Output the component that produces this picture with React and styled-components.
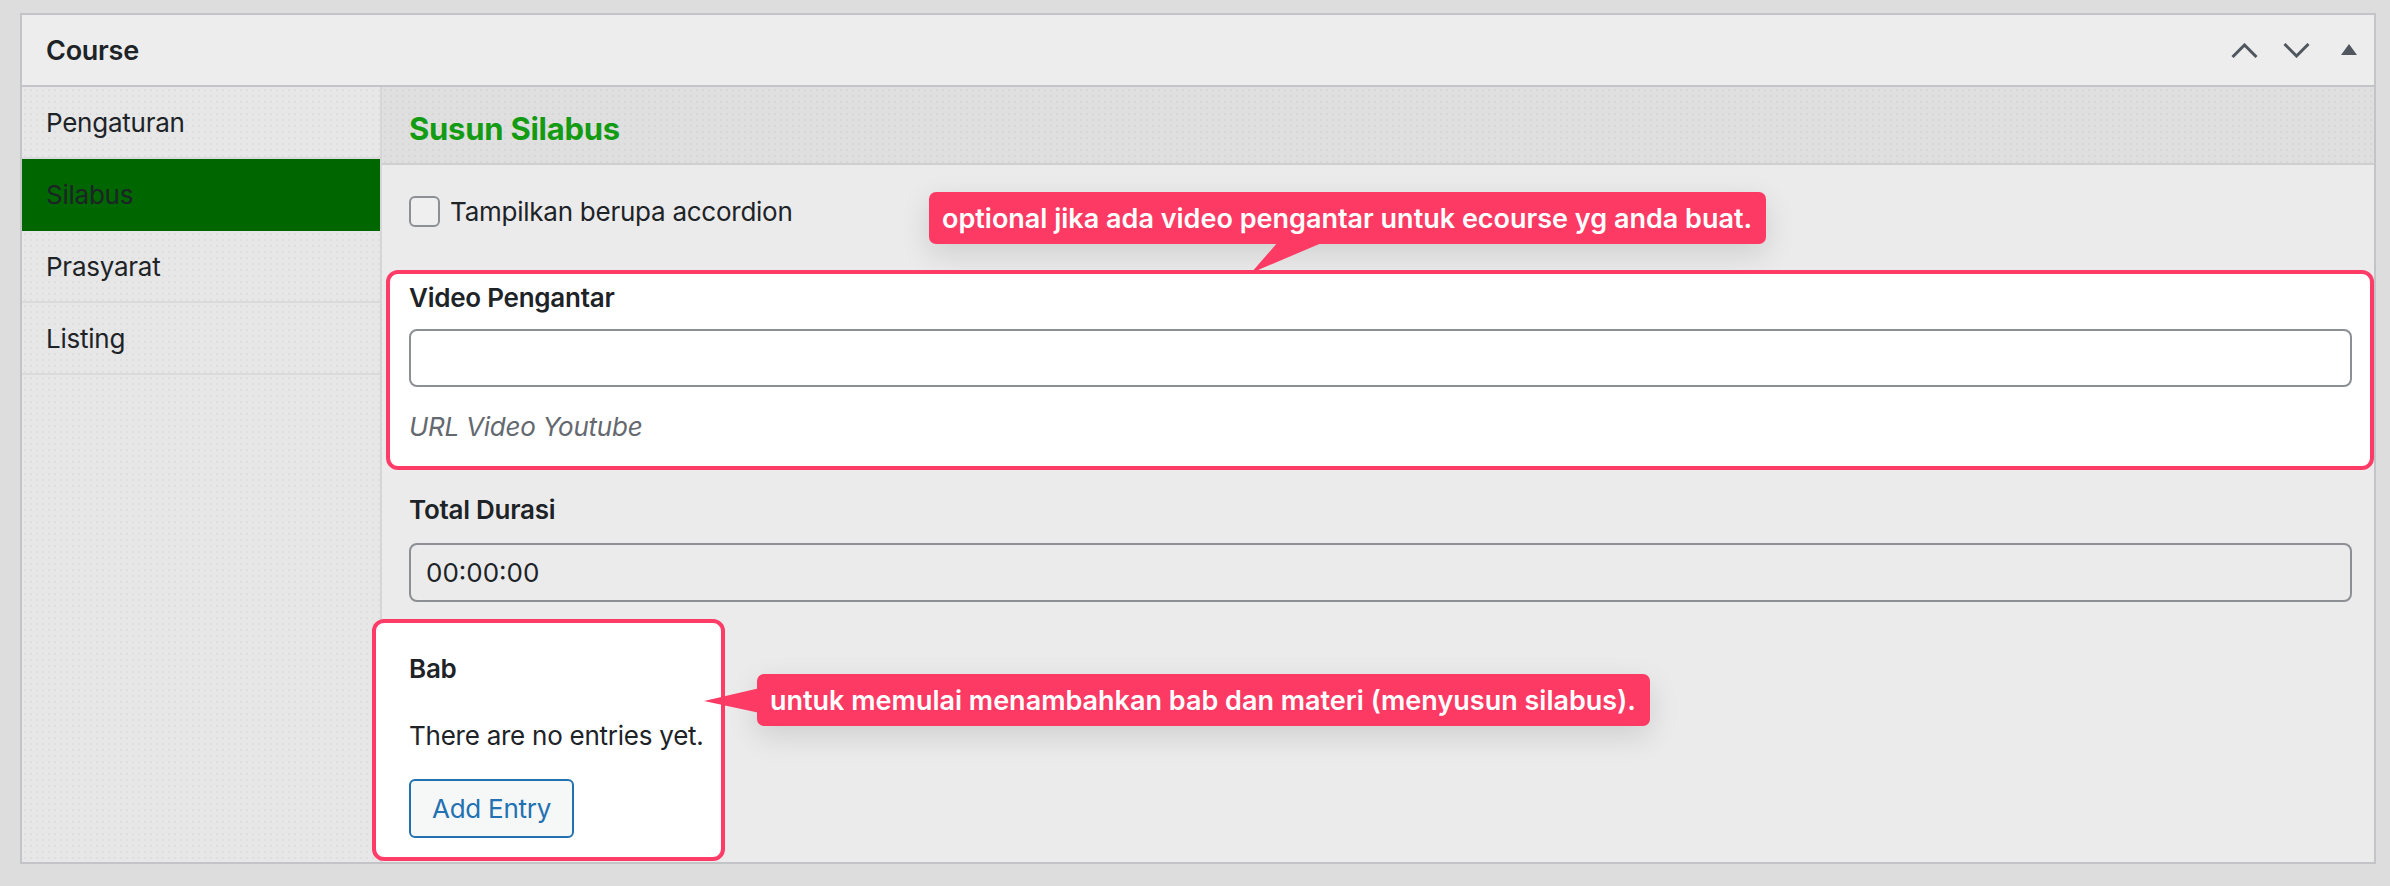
import React from 'react';
import styled, { createGlobalStyle, css } from 'styled-components';

const GlobalStyle = createGlobalStyle`
  body {
    margin: 0;
    background: #dddddd;
    font-family: Inter, "Noto Sans", "Liberation Sans", sans-serif;
    color: #1d2327;
    letter-spacing: -0.25px;
  }
  * { box-sizing: border-box; }
`;

const dots = css`
  background-image: radial-gradient(rgba(0, 0, 0, 0.035) 1px, transparent 1.2px);
  background-size: 6px 6px;
`;

const Page = styled.div`
  padding: 13px 14px 0 20px;
`;

const Postbox = styled.section`
  border: 2px solid #c3c4c7;
  background: #ebebeb;
`;

const Header = styled.header`
  display: flex;
  align-items: center;
  justify-content: space-between;
  height: 72px;
  padding: 0 17px 0 24px;
  background: #ededed;
  border-bottom: 2px solid #c3c4c7;
`;

const BoxTitle = styled.h2`
  margin: 0;
  font-size: 27px;
  font-weight: 600;
`;

const HandleActions = styled.div`
  display: flex;
  align-items: center;
  gap: 25px;
  color: #50575e;

  & > svg:last-child {
    margin-left: 6px;
  }
`;

const Body = styled.div`
  display: flex;
`;

const Sidebar = styled.nav`
  width: 360px;
  flex-shrink: 0;
  background-color: #e7e7e7;
  ${dots};
  border-right: 2px solid #d6d6d6;
`;

const TabItem = styled.div`
  display: flex;
  align-items: center;
  height: 72px;
  padding-left: 24px;
  font-size: 26px;
  border-bottom: 2px solid #dadada;
  ${p => p.$active && css`
    background: #006600;
    background-image: none;
    border-bottom-color: #006600;
  `}
`;

const Panel = styled.div`
  flex: 1;
  background: #ebebeb;
`;

const PanelTitle = styled.h3`
  margin: 0;
  display: flex;
  align-items: center;
  height: 78px;
  padding: 6px 0 0 27px;
  background-color: #dfdfdf;
  ${dots};
  border-bottom: 2px solid #cfcfcf;
  color: #149b14;
  font-size: 31px;
  font-weight: 700;
`;

const Form = styled.div`
  display: flex;
  flex-direction: column;
  padding: 31px 22px 1px 27px;
`;

const CheckRow = styled.label`
  display: flex;
  align-items: center;
  gap: 10px;
  height: 31px;
  font-size: 26px;
`;

const Checkbox = styled.input`
  appearance: none;
  margin: 0;
  width: 31px;
  height: 31px;
  border: 2px solid #8c8f94;
  border-radius: 6px;
  background: #efefef;
`;

const Highlight = styled.div`
  position: relative;
  background: #fff;
  border: 4px solid #ff3b67;
  border-radius: 12px;
  ${p => p.$wide
    ? css`
      margin: 43px -22px 0 -23px;
      padding: 6px 18px 21px 19px;
    `
    : css`
      align-self: flex-start;
      width: 353px;
      margin: 17px 0 0 -37px;
      padding: 28px 0 19px 33px;
    `}
`;

const Label = styled.div`
  font-size: 26px;
  font-weight: 600;
  line-height: 36px;
  margin-top: ${p => p.$gap || 0}px;
`;

const TextInput = styled.input`
  display: block;
  width: 100%;
  height: ${p => p.$h || 58}px;
  margin-top: ${p => p.$gap || 13}px;
  padding: 0 15px;
  border: 2px solid #8c8f94;
  border-radius: 8px;
  background: ${p => p.$plain ? 'transparent' : '#fff'};
  font-family: inherit;
  font-size: 26px;
  color: #1d2327;
`;

const Description = styled.p`
  margin: 22px 0 0;
  font-size: 26px;
  line-height: 36px;
  font-style: italic;
  color: #646970;
`;

const Text = styled.p`
  margin: 31px 0 0;
  font-size: 26px;
  line-height: 36px;
`;

const Button = styled.button`
  display: block;
  margin-top: 25px;
  height: 59px;
  padding: 0 21px;
  border: 2px solid #2271b1;
  border-radius: 6px;
  background: #f6f7f7;
  color: #2271b1;
  font-family: inherit;
  font-size: 26px;
  letter-spacing: -0.25px;
`;

const Callout = styled.div`
  position: absolute;
  z-index: 2;
  left: ${p => p.$x}px;
  top: ${p => p.$y}px;
  display: flex;
  align-items: center;
  height: 52px;
  padding: 0 14px 0 13px;
  border-radius: 7px;
  background: #fd3a64;
  color: #fff;
  font-size: 27px;
  font-weight: 600;
  letter-spacing: 0;
  white-space: nowrap;
  box-shadow: 0 10px 30px rgba(0, 0, 0, 0.12);

  &::after {
    content: '';
    position: absolute;
    background: #fd3a64;
    ${p => p.$tail === 'down'
      ? css`
        left: 320px;
        top: 50px;
        width: 76px;
        height: 31px;
        clip-path: polygon(29px 0, 75px 0, 2px 31px);
      `
      : css`
        left: -53px;
        top: 14px;
        width: 56px;
        height: 25px;
        clip-path: polygon(56px 0, 0 13px, 56px 25px);
      `}
  }
`;

function ChevronUp() {
  return (
    <svg width="27" height="15" viewBox="0 0 27 15" fill="none" stroke="currentColor" strokeWidth="3">
      <path d="M1.5 14 L13.5 2 L25.5 14" />
    </svg>
  );
}

function ChevronDown() {
  return (
    <svg width="27" height="15" viewBox="0 0 27 15" fill="none" stroke="currentColor" strokeWidth="3">
      <path d="M1.5 1 L13.5 13 L25.5 1" />
    </svg>
  );
}

function Caret() {
  return (
    <svg width="16" height="12" viewBox="0 0 16 12">
      <polygon points="0,11 8,0 16,11" fill="currentColor" />
    </svg>
  );
}

const tabs = ['Pengaturan', 'Silabus', 'Prasyarat', 'Listing'];

export default function App() {
  return (
    <Page>
      <GlobalStyle />
      <Postbox>
        <Header>
          <BoxTitle>Course</BoxTitle>
          <HandleActions>
            <ChevronUp />
            <ChevronDown />
            <Caret />
          </HandleActions>
        </Header>

        <Body>
          <Sidebar>
            {tabs.map(t => (
              <TabItem key={t} $active={t === 'Silabus'}>{t}</TabItem>
            ))}
          </Sidebar>

          <Panel>
            <PanelTitle>Susun Silabus</PanelTitle>
            <Form>
              <CheckRow>
                <Checkbox type="checkbox" />
                Tampilkan berupa accordion
              </CheckRow>

              <Highlight $wide>
                <Callout $x={539} $y={-82} $tail="down">
                  optional jika ada video pengantar untuk ecourse yg anda buat.
                </Callout>
                <Label>Video Pengantar</Label>
                <TextInput type="text" defaultValue="" />
                <Description>URL Video Youtube</Description>
              </Highlight>

              <Label $gap={22}>Total Durasi</Label>
              <TextInput type="text" defaultValue="00:00:00" $plain $h={59} $gap={15} readOnly />

              <Highlight>
                <Callout $x={381} $y={51} $tail="left">
                  untuk memulai menambahkan bab dan materi (menyusun silabus).
                </Callout>
                <Label>Bab</Label>
                <Text>There are no entries yet.</Text>
                <Button type="button">Add Entry</Button>
              </Highlight>
            </Form>
          </Panel>
        </Body>
      </Postbox>
    </Page>
  );
}
